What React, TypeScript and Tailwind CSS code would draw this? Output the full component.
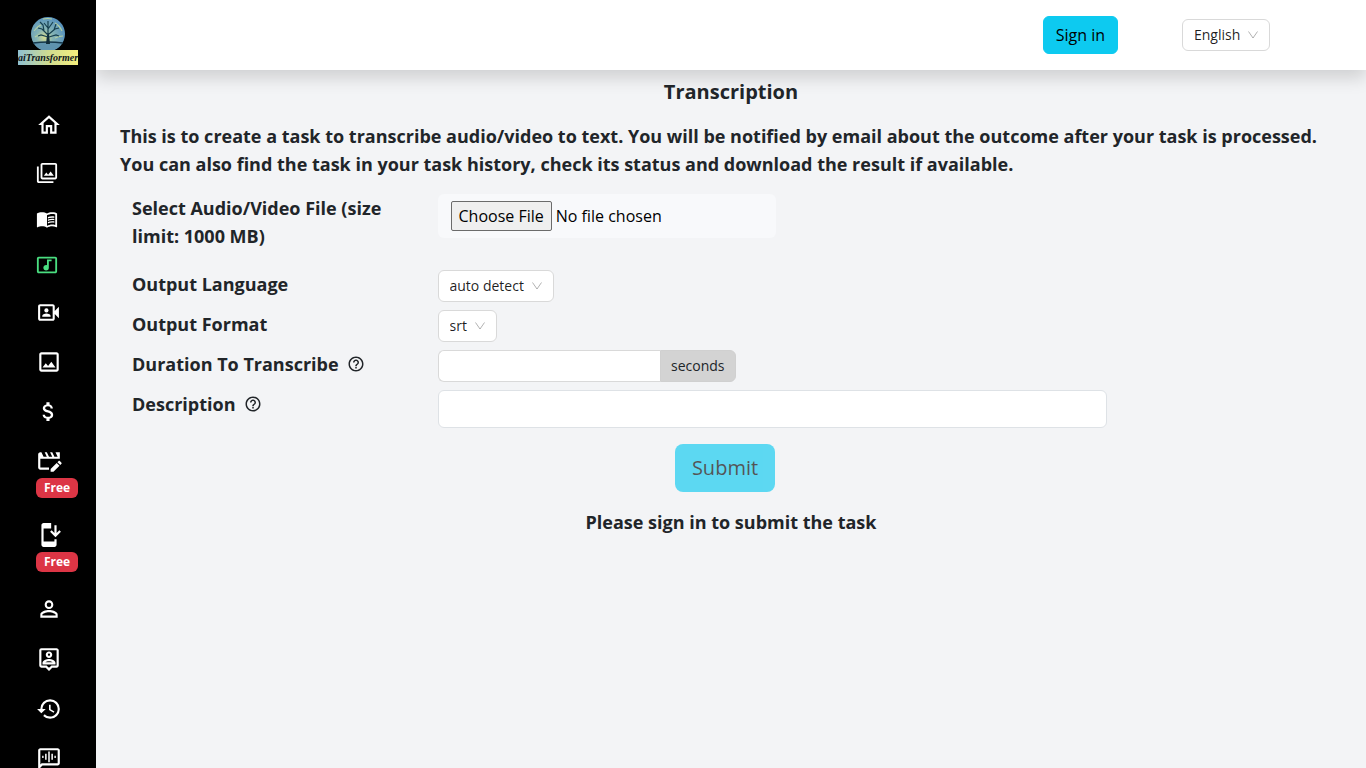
import { useState } from "react";
import type { ReactNode } from "react";
import {
  MdAttachMoney,
  MdHelpOutline,
  MdHistory,
  MdInstallMobile,
  MdMenuBook,
  MdOutlineFilter,
  MdOutlineHome,
  MdOutlineImage,
  MdOutlineMusicVideo,
  MdOutlinePersonPin,
  MdOutlineVideoCameraFront,
  MdPersonOutline,
} from "react-icons/md";

function MovieEditIcon({ size }: { size: number }) {
  return (
    <svg width={size} height={size} viewBox="0 0 24 24" fill="currentColor">
      <path d="M22 10V4h-4l2 4h-3l-2-4h-2l2 4h-3l-2-4H8l2 4H7L5 4H4c-1.1 0-2 .9-2 2v12c0 1.1.9 2 2 2h8v-2H4V10z" />
      <path d="M13.5 22v-2.6l5.6-5.6 2.6 2.6-5.6 5.6zM19.8 13.1l1.1-1.1c.3-.3.8-.3 1.1 0l1.5 1.5c.3.3.3.8 0 1.1l-1.1 1.1z" />
    </svg>
  );
}

function VoiceMessageIcon({ size }: { size: number }) {
  return (
    <svg width={size} height={size} viewBox="0 0 24 24" fill="currentColor">
      <path d="M20 2H4c-1.1 0-2 .9-2 2v18l4-4h14c1.1 0 2-.9 2-2V4c0-1.1-.9-2-2-2zm0 14H5.17L4 17.17V4h16v12z" />
      <path d="M5.7 9h1.3v2H5.7zM8.4 7.2h1.4v5.6H8.4zM11.3 5h1.4v10h-1.4zM14.2 7.2h1.4v5.6h-1.4zM17 9h1.3v2H17z" />
    </svg>
  );
}

const navItems = [
  { label: "Home", icon: <MdOutlineHome size={26} /> },
  { label: "Gallery", icon: <MdOutlineFilter size={22} /> },
  { label: "Stories", icon: <MdMenuBook size={22} /> },
  { label: "Transcription", icon: <MdOutlineMusicVideo size={22} />, active: true },
  { label: "Video", icon: <MdOutlineVideoCameraFront size={25} /> },
  { label: "Image", icon: <MdOutlineImage size={26} /> },
  { label: "Pricing", icon: <MdAttachMoney size={25} /> },
  { label: "Video editor", icon: <MovieEditIcon size={26} />, badge: "Free" },
  { label: "Install", icon: <MdInstallMobile size={26} />, badge: "Free" },
  { label: "Account", icon: <MdPersonOutline size={26} /> },
  { label: "Contact", icon: <MdOutlinePersonPin size={26} /> },
  { label: "History", icon: <MdHistory size={26} /> },
  { label: "Voice chat", icon: <VoiceMessageIcon size={26} /> },
];

function Logo() {
  return (
    <a href="#" className="flex flex-col items-center">
      <svg width="34" height="33" viewBox="0 0 34 33">
        <defs>
          <radialGradient id="sky" cx="0.4" cy="0.6" r="0.6">
            <stop offset="0" stopColor="#d6dc92" />
            <stop offset="0.4" stopColor="#86b4b4" />
            <stop offset="1" stopColor="#5a94bd" />
          </radialGradient>
        </defs>
        <circle cx="17" cy="17" r="17" fill="url(#sky)" />
        <path d="M2 25h30a17 17 0 0 1-30 0z" fill="#5f93ae" />
        <path
          d="M3 14q4-5 7-6M24 6q5 3 7 8M4 20q4-3 7-2M24 21q4-2 8-2M12 2q5-1 9 0"
          stroke="#b5cfa0"
          strokeWidth="1.2"
          fill="none"
        />
        <path d="M2 26q15-2 30 0" stroke="#15384c" strokeWidth="1.5" fill="none" />
        <path d="M15 27l1.3-11h1.6L19 27z" fill="#102c39" />
        <path
          d="M17 18L11 12l-4-1M13 14l-1-6-3-3M17 17V4M17 11l-4-5M17 12l5-7M18 17l6-5 4-1M23 13l2-6M17 20l-7-2-3 1M18 20l7-2 3 1"
          stroke="#17404f"
          strokeWidth="1.2"
          fill="none"
        />
      </svg>
      <span className="flex h-[15px] w-[60px] items-center justify-center bg-linear-to-r from-[#8fc0d0] via-[#cfdc90] to-[#f5ee7c] font-['Liberation_Serif',serif] text-[10px] leading-none font-bold text-[#101820] italic">
        aiTransformer
      </span>
    </a>
  );
}

function Sidebar() {
  return (
    <aside className="relative z-10 flex w-24 shrink-0 flex-col overflow-hidden bg-black pt-[17px]">
      <Logo />
      <nav className="mt-[47px] flex flex-col gap-6 pl-9">
        {navItems.map((item) => (
          <a
            key={item.label}
            href="#"
            aria-label={item.label}
            className={item.active ? "flex flex-col items-start gap-1 text-[#4ade80]" : "flex flex-col items-start gap-1 text-white"}
          >
            {item.icon}
            {item.badge && (
              <span className="flex h-5 w-[42px] items-center justify-center rounded-md bg-[#dc3545] text-xs font-bold">
                {item.badge}
              </span>
            )}
          </a>
        ))}
      </nav>
    </aside>
  );
}

interface SelectProps {
  id: string;
  options: string[];
  className: string;
}

function Select({ id, options, className }: SelectProps) {
  const [value, setValue] = useState(options[0]);

  return (
    <div className={`relative h-8 ${className}`}>
      <select
        id={id}
        aria-label={id}
        value={value}
        onChange={(e) => setValue(e.target.value)}
        className="h-full w-full appearance-none rounded-md border border-[#d9d9d9] bg-white pl-[11px] text-sm text-black/88"
      >
        {options.map((option) => (
          <option key={option}>{option}</option>
        ))}
      </select>
      <svg
        className="pointer-events-none absolute top-[10px] right-[11px] text-black/30"
        width="12"
        height="12"
        viewBox="0 0 12 12"
        fill="none"
        stroke="currentColor"
      >
        <path d="M1.5 2.5L6 9l4.5-6.5" />
      </svg>
    </div>
  );
}

interface FieldProps {
  label: string;
  htmlFor: string;
  help?: boolean;
  children: ReactNode;
}

function Field({ label, htmlFor, help, children }: FieldProps) {
  return (
    <div className="flex">
      <div className="flex w-1/4 shrink-0 items-start gap-2 px-3">
        <label htmlFor={htmlFor} className="text-lg font-bold">
          {label}
        </label>
        {help && <MdHelpOutline size={18} className="mt-[5px] shrink-0" />}
      </div>
      <div className="grow pl-3">{children}</div>
    </div>
  );
}

export default function App() {
  const [duration, setDuration] = useState("");
  const [description, setDescription] = useState("");

  return (
    <div className="flex h-screen overflow-hidden bg-gray-100 font-['Open_Sans','Noto_Sans',sans-serif] text-[#212529]">
      <Sidebar />
      <div className="flex grow flex-col">
        <header className="flex h-[70px] shrink-0 items-center justify-end gap-16 bg-white pr-24 shadow-[0_8px_16px_rgba(0,0,0,0.15)]">
          <button type="button" className="rounded-md border border-[#0dcaf0] bg-[#0dcaf0] px-3 py-[6px] text-base text-black">
            Sign in
          </button>
          <Select id="language" options={["English", "Español", "Français"]} className="w-[88px]" />
        </header>

        <main className="px-6 pt-2">
          <h1 className="text-center text-xl font-bold">Transcription</h1>
          <p className="mt-4 text-lg font-bold">
            This is to create a task to transcribe audio/video to text. You will be notified by email about the outcome
            after your task is processed. You can also find the task in your task history, check its status and download
            the result if available.
          </p>

          <form className="mt-4 flex flex-col gap-2" onSubmit={(e) => e.preventDefault()}>
            <div className="mb-3">
              <Field label="Select Audio/Video File (size limit: 1000 MB)" htmlFor="file">
                <input
                  id="file"
                  type="file"
                  className="h-11 w-[338px] rounded-md bg-[#f8f9fb] px-[13px] py-[7px] text-base text-black file:rounded-xs file:border file:border-[#6b6b6b] file:bg-[#efefef] file:px-[7px] file:py-[2px]"
                />
              </Field>
            </div>
            <Field label="Output Language" htmlFor="output-language">
              <Select id="output-language" options={["auto detect", "English", "Français"]} className="w-[116px]" />
            </Field>
            <Field label="Output Format" htmlFor="output-format">
              <Select id="output-format" options={["srt", "vtt", "txt"]} className="w-[59px]" />
            </Field>
            <Field label="Duration To Transcribe" htmlFor="duration" help>
              <div className="flex h-8 w-[298px]">
                <input
                  id="duration"
                  value={duration}
                  onChange={(e) => setDuration(e.target.value)}
                  className="min-w-0 grow rounded-l-md border border-r-0 border-[#d9d9d9] bg-white px-[11px] text-sm"
                />
                <span className="flex items-center rounded-r-md border border-[#d0d0d0] bg-[#d3d3d3] px-[10px] text-sm">
                  seconds
                </span>
              </div>
            </Field>
            <Field label="Description" htmlFor="description" help>
              <input
                id="description"
                value={description}
                onChange={(e) => setDescription(e.target.value)}
                className="block h-[38px] w-[74%] rounded-md border border-[#dee2e6] bg-white px-3 text-base"
              />
            </Field>
            <div className="mt-2 flex justify-center pr-3">
              <button type="submit" disabled className="h-12 rounded-lg bg-[#0dcaf0] px-[17px] text-xl text-black opacity-65">
                Submit
              </button>
            </div>
          </form>
          <p className="mt-4 text-center text-lg font-bold">Please sign in to submit the task</p>
        </main>
      </div>
    </div>
  );
}
